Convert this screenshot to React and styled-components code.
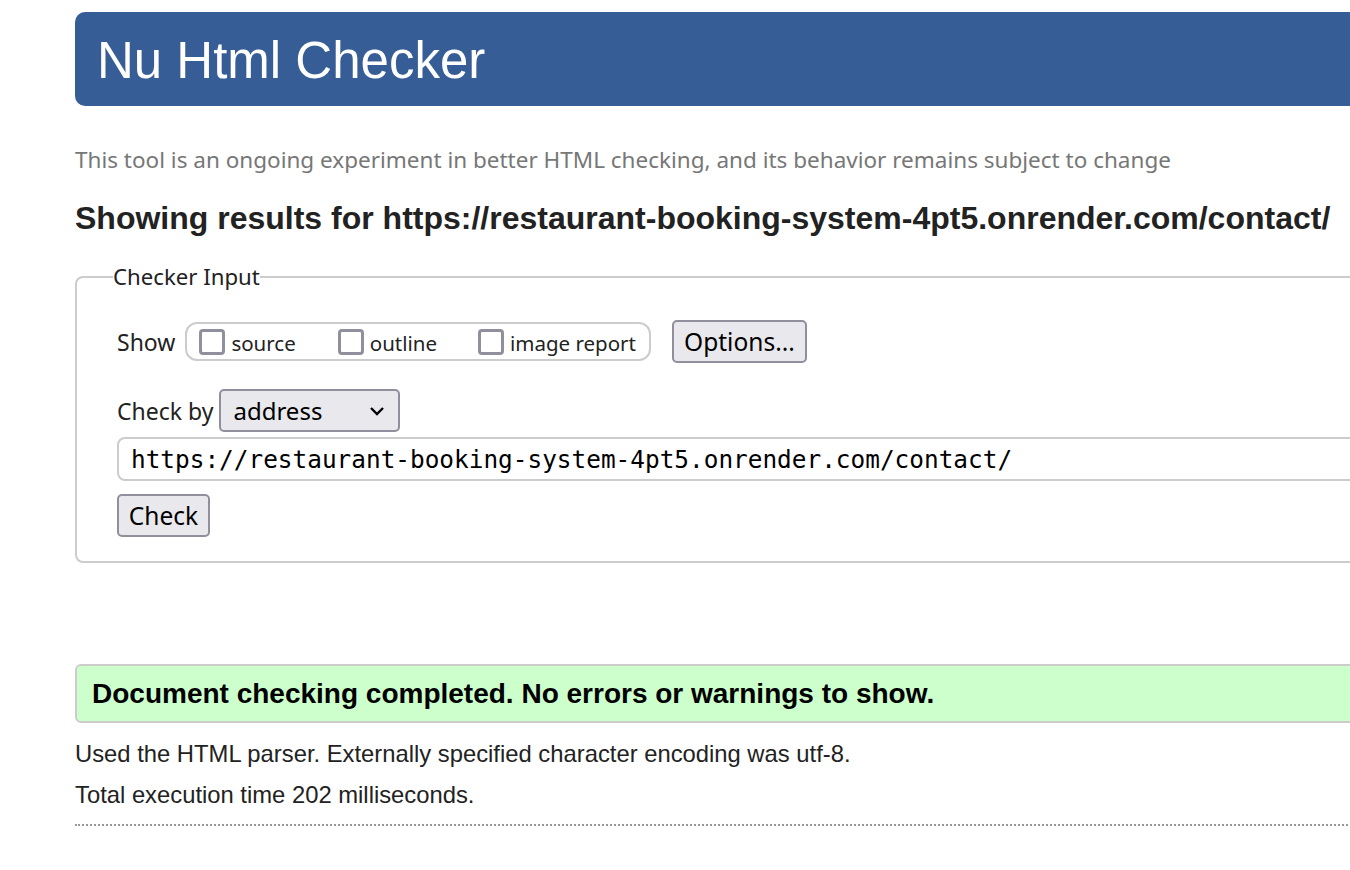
import React from "react";
import styled, { createGlobalStyle } from "styled-components";

const GlobalStyle = createGlobalStyle`
  html, body {
    margin: 0;
    padding: 0;
    background: #fff;
    overflow: hidden;
  }
`;

const sans = `"Noto Sans", "Open Sans", sans-serif`;
const arial = `"Liberation Sans", Arial, sans-serif`;

const App = () => {
  return (
    <>
      <GlobalStyle />
      <Page>
        {/* header */}
        <Header>
          <Title>Nu Html Checker</Title>
        </Header>

        <Intro>
          This tool is an ongoing experiment in better HTML checking, and its
          behavior remains subject to change
        </Intro>

        <Results>
          Showing results for https://restaurant-booking-system-4pt5.onrender.com/contact/
        </Results>

        {/* checker input */}
        <Fieldset>
          <Legend>Checker Input</Legend>

          <Row $top={28}>
            <Label $gap={10}>Show</Label>
            <CheckGroup>
              <CheckItem $gap={42}>
                <Box />
                <span>source</span>
              </CheckItem>
              <CheckItem $gap={41}>
                <Box />
                <span>outline</span>
              </CheckItem>
              <CheckItem>
                <Box />
                <span>image report</span>
              </CheckItem>
            </CheckGroup>
            <Button $ml={21} $w={135}>Options...</Button>
          </Row>

          <Row $top={26}>
            <Label $gap={6}>Check by</Label>
            <Select>
              <span>address</span>
              <svg width="16" height="10" viewBox="0 0 16 10">
                <polyline
                  points="2,2 8,8 14,2"
                  fill="none"
                  stroke="#000"
                  strokeWidth="2.4"
                />
              </svg>
            </Select>
          </Row>

          <UrlInput>https://restaurant-booking-system-4pt5.onrender.com/contact/</UrlInput>

          <Button $w={93} $top={13}>Check</Button>
        </Fieldset>

        {/* result */}
        <Success>Document checking completed. No errors or warnings to show.</Success>

        <Info $top={17}>Used the HTML parser. Externally specified character encoding was utf-8.</Info>
        <Info $top={13}>Total execution time 202 milliseconds.</Info>

        <Dotted />
      </Page>
    </>
  );
};

const Page = styled.div`
  width: 1420px;
  padding: 12px 0 40px 75px;
`;

const Header = styled.div`
  height: 94px;
  display: flex;
  align-items: center;
  padding-left: 22px;
  background-color: #365d95;
  border-radius: 10px;
`;

const Title = styled.h1`
  margin: 0;
  font-family: ${arial};
  font-weight: 400;
  font-size: 51px;
  line-height: 1;
  color: #fff;
  padding-top: 2px;
`;

const Intro = styled.p`
  margin: 39px 0 0;
  font-family: ${sans};
  font-size: 22.5px;
  line-height: 30px;
  color: #777;
`;

const Results = styled.h2`
  margin: 23px 0 0;
  font-family: ${arial};
  font-weight: 700;
  font-size: 32px;
  line-height: 40px;
  color: #222;
`;

const Fieldset = styled.fieldset`
  margin: 24px 0 0;
  padding: 0 0 24px 40px;
  min-width: 0;
  border: 2px solid #ccc;
  border-radius: 8px;
  font-family: ${sans};
`;

const Legend = styled.legend`
  margin-left: -4px;
  padding: 0;
  font-family: ${sans};
  font-size: 22.2px;
  line-height: 30px;
  color: #222;
`;

const Row = styled.div`
  display: flex;
  align-items: center;
  margin-top: ${({ $top }) => $top || 0}px;
`;

const Label = styled.span`
  font-family: ${sans};
  font-size: 23px;
  color: #222;
  margin-right: ${({ $gap }) => $gap}px;
`;

const CheckGroup = styled.div`
  display: flex;
  align-items: center;
  height: 35px;
  padding: 0 13px 0 12px;
  border: 2px solid #ccc;
  border-radius: 12px;
`;

const CheckItem = styled.label`
  display: flex;
  align-items: center;
  gap: 6px;
  margin-right: ${({ $gap }) => $gap || 0}px;
  font-family: ${sans};
  font-size: 20.5px;
  color: #222;

  span {
    padding-top: 3px;
  }
`;

const Box = styled.span`
  box-sizing: border-box;
  width: 26px;
  height: 26px;
  border: 3px solid #8f8f9d;
  border-radius: 4px;
  background: #fff;
`;

const Button = styled.button`
  box-sizing: border-box;
  display: block;
  width: ${({ $w }) => $w}px;
  height: 43px;
  margin-left: ${({ $ml }) => $ml || 0}px;
  margin-top: ${({ $top }) => $top || 0}px;
  padding: 0;
  background-color: #e9e9ed;
  border: 2px solid #8f8f9d;
  border-radius: 5px;
  font-family: ${sans};
  font-size: 24.5px;
  color: #000;
`;

const Select = styled.div`
  box-sizing: border-box;
  display: flex;
  align-items: center;
  justify-content: space-between;
  width: 181px;
  height: 43px;
  padding: 0 13px 0 12px;
  background-color: #e9e9ed;
  border: 2px solid #8f8f9d;
  border-radius: 5px;
  font-family: ${sans};
  font-size: 24px;
  color: #000;
`;

const UrlInput = styled.div`
  box-sizing: border-box;
  height: 44px;
  margin-top: 5px;
  display: flex;
  align-items: center;
  padding-left: 12px;
  border: 2px solid #ccc;
  border-radius: 8px;
  font-family: "DejaVu Sans Mono", "Liberation Mono", monospace;
  font-size: 24.4px;
  color: #000;
`;

const Success = styled.div`
  box-sizing: border-box;
  height: 59px;
  margin-top: 101px;
  display: flex;
  align-items: center;
  padding-left: 15px;
  background-color: #ccffcc;
  border: 2px solid #ccc;
  border-radius: 6px;
  font-family: ${arial};
  font-weight: 700;
  font-size: 28px;
  color: #000;
`;

const Info = styled.p`
  margin: ${({ $top }) => $top}px 0 0;
  font-family: ${arial};
  font-size: 23.8px;
  line-height: 28px;
  color: #222;
`;

const Dotted = styled.hr`
  margin: 15px 0 0;
  border: 0;
  border-top: 2px dotted #999;
`;

export default App;
